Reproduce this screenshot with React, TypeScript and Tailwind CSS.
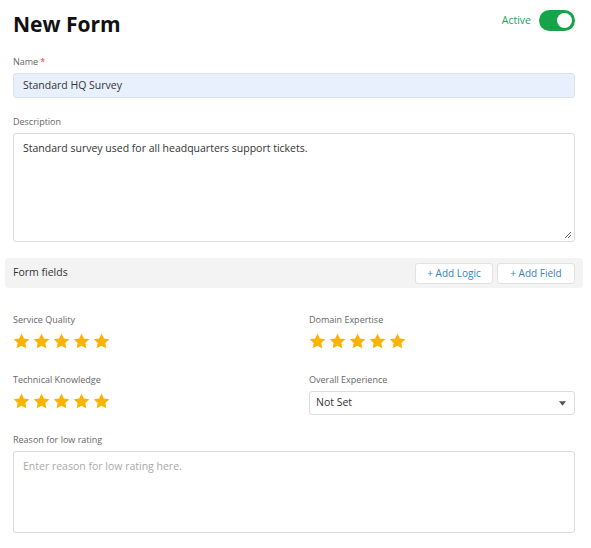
const Star = () => (
  <svg width="17" height="16" viewBox="0 0 24 23" className="fill-[#f8b400]">
    <path d="M12 0.8l3.4 7.1 7.8 1-5.7 5.4 1.4 7.7L12 18.2 5.1 22l1.4-7.7L0.8 8.9l7.8-1z" />
  </svg>
);

const Stars = () => (
  <div className="flex gap-[3px] mt-[5px]">
    {[0, 1, 2, 3, 4].map((i) => (
      <Star key={i} />
    ))}
  </div>
);

const Label = ({ children }: { children: React.ReactNode }) => (
  <div className="text-[9px] leading-[16px] text-[#666]">{children}</div>
);

const App = () => {
  return (
    <div className="w-[591px] h-[548px] bg-white font-['Open_Sans',sans-serif] text-[#333] pl-[13px] pr-[16px] overflow-hidden">
      <div className="flex items-start justify-between pt-[9px] h-[54px]">
        <h1 className="text-[21px] font-bold leading-[30px] text-[#111]">New Form</h1>
        <div className="flex items-center gap-[8px] mt-[1px]">
          <span className="text-[10.5px] text-[#2a9d5c]">Active</span>
          <div className="w-[36px] h-[21px] rounded-full bg-[#16a34a] relative">
            <div className="absolute right-[3px] top-[3px] w-[15px] h-[15px] rounded-full bg-white" />
          </div>
        </div>
      </div>

      <Label>
        Name<span className="text-[#e53935] ml-[2px]">*</span>
      </Label>
      <div className="mt-[3px] h-[25px] rounded-[3px] border border-[#dde3ec] bg-[#e8f0fd] flex items-center px-[9px] text-[10.5px]">
        Standard HQ Survey
      </div>

      <div className="mt-[16px]">
        <Label>Description</Label>
      </div>
      <div className="mt-[3px] h-[109px] rounded-[3px] border border-[#dcdcdc] relative px-[9px] pt-[6px] text-[10.5px] leading-[16px]">
        Standard survey used for all headquarters support tickets.
        <svg className="absolute right-[2px] bottom-[2px]" width="8" height="8" viewBox="0 0 8 8">
          <path d="M7 1L1 7M7 4L4 7" stroke="#666" strokeWidth="1" />
        </svg>
      </div>

      <div className="-mx-[8px] mt-[16px] h-[30px] rounded-[4px] bg-[#f3f3f3] flex items-center justify-between pl-[8px] pr-[8px]">
        <span className="text-[10.5px] text-[#333]">Form fields</span>
        <div className="flex gap-[4px]">
          <button className="w-[78px] h-[21px] bg-white border border-[#e2e2e2] rounded-[3px] text-[10px] text-[#3585bd]">
            + Add Logic
          </button>
          <button className="w-[78px] h-[21px] bg-white border border-[#e2e2e2] rounded-[3px] text-[10px] text-[#3585bd]">
            + Add Field
          </button>
        </div>
      </div>

      <div className="grid grid-cols-2 gap-x-[30px] mt-[24px]">
        <div>
          <Label>Service Quality</Label>
          <Stars />
        </div>
        <div>
          <Label>Domain Expertise</Label>
          <Stars />
        </div>
      </div>

      <div className="grid grid-cols-2 gap-x-[30px] mt-[23px]">
        <div>
          <Label>Technical Knowledge</Label>
          <Stars />
        </div>
        <div>
          <Label>Overall Experience</Label>
          <div className="mt-[3px] h-[24px] rounded-[3px] border border-[#dcdcdc] flex items-center justify-between pl-[6px] pr-[8px] text-[10.5px]">
            <span>Not Set</span>
            <svg width="7" height="5" viewBox="0 0 8 5">
              <path d="M0 0h8L4 5z" fill="#555" />
            </svg>
          </div>
        </div>
      </div>

      <div className="mt-[17px]">
        <Label>Reason for low rating</Label>
      </div>
      <div className="mt-[3px] h-[82px] rounded-[3px] border border-[#dcdcdc] px-[9px] pt-[6px] text-[10.5px] leading-[16px] text-[#aaa]">
        Enter reason for low rating here.
      </div>
    </div>
  );
};

export default App;
